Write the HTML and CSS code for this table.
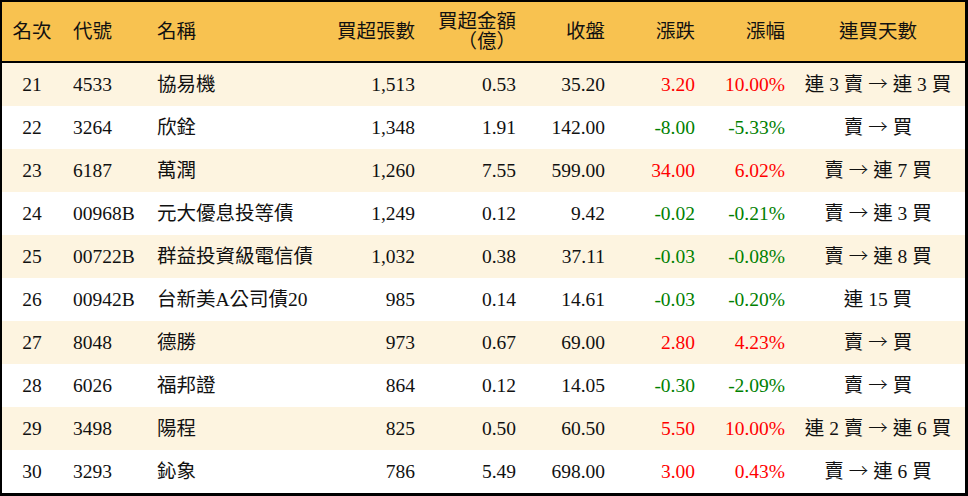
FILE: index.html
```html
<!DOCTYPE html>
<html lang="zh-Hant">
<head>
<meta charset="utf-8">
<title>買超排行</title>
<link rel="stylesheet" href="styles.css">
</head>
<body>
<table class="rank">
  <colgroup>
    <col class="c-rank"><col class="c-code"><col class="c-name"><col class="c-vol"><col class="c-amt"><col class="c-close"><col class="c-chg"><col class="c-pct"><col class="c-days">
  </colgroup>
  <thead>
    <tr>
      <th class="center">名次</th>
      <th class="left">代號</th>
      <th class="left">名稱</th>
      <th class="right">買超張數</th>
      <th class="right two">買超金額<br>（億）</th>
      <th class="right">收盤</th>
      <th class="right">漲跌</th>
      <th class="right">漲幅</th>
      <th class="center days">連買天數</th>
    </tr>
  </thead>
  <tbody>
    <tr class="odd"><td class="center">21</td><td class="left">4533</td><td class="left">協易機</td><td class="right">1,513</td><td class="right">0.53</td><td class="right">35.20</td><td class="right up">3.20</td><td class="right up">10.00%</td><td class="center days">連 3 賣 <span class="arr">→</span> 連 3 買</td></tr>
    <tr><td class="center">22</td><td class="left">3264</td><td class="left">欣銓</td><td class="right">1,348</td><td class="right">1.91</td><td class="right">142.00</td><td class="right down">-8.00</td><td class="right down">-5.33%</td><td class="center days">賣 <span class="arr">→</span> 買</td></tr>
    <tr class="odd"><td class="center">23</td><td class="left">6187</td><td class="left">萬潤</td><td class="right">1,260</td><td class="right">7.55</td><td class="right">599.00</td><td class="right up">34.00</td><td class="right up">6.02%</td><td class="center days">賣 <span class="arr">→</span> 連 7 買</td></tr>
    <tr><td class="center">24</td><td class="left">00968B</td><td class="left">元大優息投等債</td><td class="right">1,249</td><td class="right">0.12</td><td class="right">9.42</td><td class="right down">-0.02</td><td class="right down">-0.21%</td><td class="center days">賣 <span class="arr">→</span> 連 3 買</td></tr>
    <tr class="odd"><td class="center">25</td><td class="left">00722B</td><td class="left">群益投資級電信債</td><td class="right">1,032</td><td class="right">0.38</td><td class="right">37.11</td><td class="right down">-0.03</td><td class="right down">-0.08%</td><td class="center days">賣 <span class="arr">→</span> 連 8 買</td></tr>
    <tr><td class="center">26</td><td class="left">00942B</td><td class="left">台新美A公司債20</td><td class="right">985</td><td class="right">0.14</td><td class="right">14.61</td><td class="right down">-0.03</td><td class="right down">-0.20%</td><td class="center days">連 15 買</td></tr>
    <tr class="odd"><td class="center">27</td><td class="left">8048</td><td class="left">德勝</td><td class="right">973</td><td class="right">0.67</td><td class="right">69.00</td><td class="right up">2.80</td><td class="right up">4.23%</td><td class="center days">賣 <span class="arr">→</span> 買</td></tr>
    <tr><td class="center">28</td><td class="left">6026</td><td class="left">福邦證</td><td class="right">864</td><td class="right">0.12</td><td class="right">14.05</td><td class="right down">-0.30</td><td class="right down">-2.09%</td><td class="center days">賣 <span class="arr">→</span> 買</td></tr>
    <tr class="odd"><td class="center">29</td><td class="left">3498</td><td class="left">陽程</td><td class="right">825</td><td class="right">0.50</td><td class="right">60.50</td><td class="right up">5.50</td><td class="right up">10.00%</td><td class="center days">連 2 賣 <span class="arr">→</span> 連 6 買</td></tr>
    <tr><td class="center">30</td><td class="left">3293</td><td class="left">鈊象</td><td class="right">786</td><td class="right">5.49</td><td class="right">698.00</td><td class="right up">3.00</td><td class="right up">0.43%</td><td class="center days">賣 <span class="arr">→</span> 連 6 買</td></tr>
  </tbody>
</table>
</body>
</html>
```
FILE: styles.css
```css
html, body {
  margin: 0;
  padding: 0;
  background: #ffffff;
}

.rank {
  width: 968px;
  height: 496px;
  box-sizing: border-box;
  border-collapse: separate;
  border-spacing: 0;
  table-layout: fixed;
  border-style: solid;
  border-color: #000;
  border-width: 2px 3px 3px 2px;
  font-family: "Liberation Serif", "Noto Sans CJK TC", serif;
  font-size: 19.5px;
  color: #111;
}

.c-rank { width: 60px; }
.c-code { width: 84px; }
.c-name { width: 184px; }
.c-vol { width: 95px; }
.c-amt { width: 101px; }
.c-close { width: 89px; }
.c-chg { width: 90px; }
.c-pct { width: 90px; }
.c-days { width: 170px; }

.rank th {
  height: 61px;
  box-sizing: border-box;
  background: #f8c250;
  font-weight: normal;
  border-bottom: 2px solid #000;
  padding: 0;
  line-height: 20px;
  vertical-align: middle;
}

.rank td {
  height: 43px;
  box-sizing: border-box;
  padding: 0;
  line-height: 22px;
  vertical-align: middle;
  white-space: nowrap;
}

.rank tr.odd td {
  background: #fdf4e0;
}

.arr {
  font-family: "Noto Sans CJK TC", sans-serif;
  font-weight: 300;
  line-height: 1;
}

.left { text-align: left; padding-left: 11px !important; }
.right { text-align: right; padding-right: 10px !important; }
.center { text-align: center; }
.days { padding-right: 4px !important; }

.up { color: #ff0000; }
.down { color: #008000; }
```
